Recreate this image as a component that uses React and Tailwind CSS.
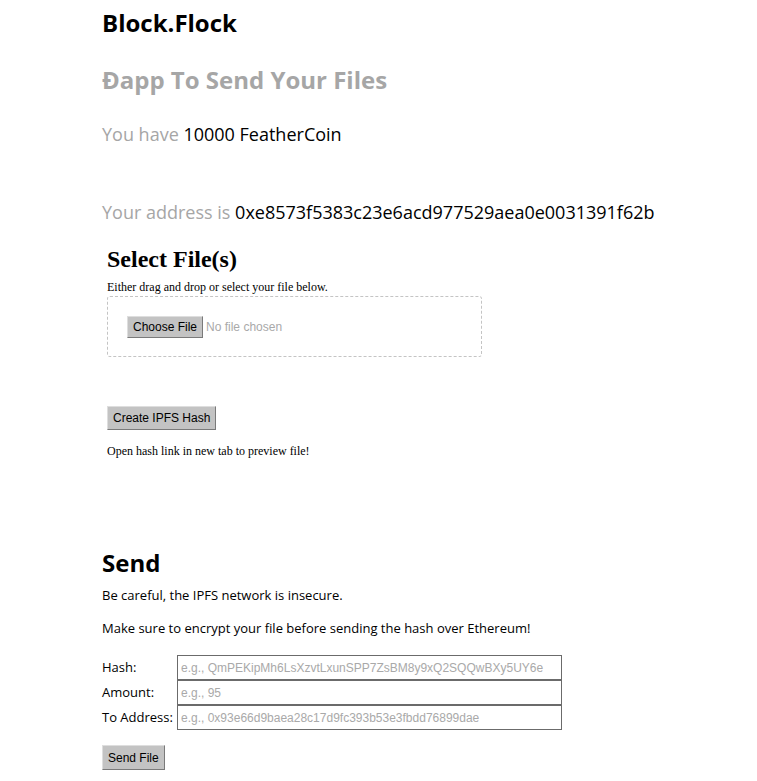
import React from 'react';

const sans = { fontFamily: '"Open Sans", sans-serif' };

const GrayButton = ({ children, className = '' }) => (
  <button
    className={`bg-[#c3c3c3] border border-t-[#dedede] border-l-[#dedede] border-b-[#7a7a7a] border-r-[#7a7a7a] px-[5px] text-[12px] leading-[20px] text-black font-['Liberation_Sans',Arial,sans-serif] ${className}`}
  >
    {children}
  </button>
);

const Field = ({ label, placeholder }) => (
  <div className="flex items-center h-[25px]">
    <label className="w-[75px] text-[13px] text-black">{label}</label>
    <input
      placeholder={placeholder}
      className="w-[385px] h-[25px] border border-[#6b6b6b] px-[3px] text-[12px] font-['Liberation_Sans',Arial,sans-serif] placeholder:text-[#a9a9a9] outline-none"
    />
  </div>
);

const App = () => {
  return (
    <div className="min-h-[781px] bg-white pl-[102px] pt-[8px] text-black font-['Open_Sans',sans-serif]">
      <h1 className="text-[24px] font-bold leading-[30px]">Block.Flock</h1>
      <h2 className="mt-[26px] text-[24px] font-bold leading-[32px] text-[#a6a6a6]">Đapp To Send Your Files</h2>

      <p className="mt-[26px] text-[18px] leading-[24px]">
        <span className="text-[#a6a6a6]">You have </span>10000 FeatherCoin
      </p>
      <p className="mt-[54px] text-[18px] leading-[24px]">
        <span className="text-[#a6a6a6]">Your address is </span>0xe8573f5383c23e6acd977529aea0e0031391f62b
      </p>

      {/* upload area */}
      <section className="ml-[5px] mt-[20px] font-['Liberation_Serif','Times_New_Roman',serif]">
        <h3 className="text-[24px] font-bold leading-[30px]">Select File(s)</h3>
        <p className="mt-[6px] text-[12px] leading-[14px]">Either drag and drop or select your file below.</p>
        <div className="mt-[2px] w-[375px] h-[61px] border border-dashed border-[#c4c4c4] rounded-[3px] pl-[19px] pt-[19px]">
          <div className="flex items-center">
            <GrayButton>Choose File</GrayButton>
            <span className="ml-[3px] text-[12px] text-[#a9a9a9] font-['Liberation_Sans',Arial,sans-serif]">No file chosen</span>
          </div>
        </div>
        <GrayButton className="mt-[49px] h-[24px]">Create IPFS Hash</GrayButton>
        <p className="mt-[14px] text-[12px] leading-[14px]">Open hash link in new tab to preview file!</p>
      </section>

      {/* send form */}
      <section className="mt-[90px]" style={sans}>
        <h3 className="text-[24px] font-bold leading-[30px]">Send</h3>
        <p className="mt-[8px] text-[13px] leading-[18px]">Be careful, the IPFS network is insecure.</p>
        <p className="mt-[15px] text-[13px] leading-[18px]">Make sure to encrypt your file before sending the hash over Ethereum!</p>
        <div className="mt-[18px] flex flex-col">
          <Field label="Hash:" placeholder="e.g., QmPEKipMh6LsXzvtLxunSPP7ZsBM8y9xQ2SQQwBXy5UY6e" />
          <Field label="Amount:" placeholder="e.g., 95" />
          <Field label="To Address:" placeholder="e.g., 0x93e66d9baea28c17d9fc393b53e3fbdd76899dae" />
        </div>
        <GrayButton className="mt-[15px] h-[25px]">Send File</GrayButton>
      </section>
    </div>
  );
};

export default App;
